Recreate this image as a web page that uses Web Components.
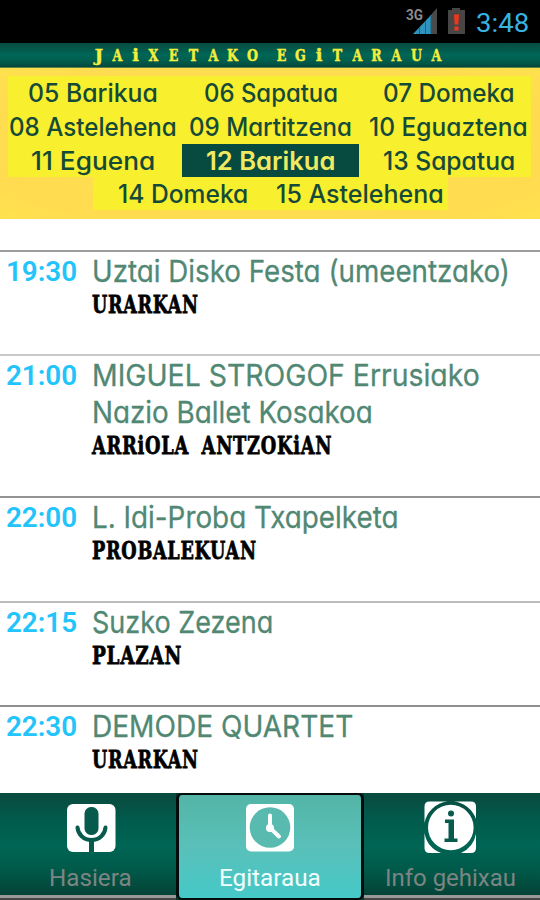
<!DOCTYPE html>
<html lang="eu">
<head>
<meta charset="utf-8">
<title>Jaixetako egitaraua</title>
<style>
body {
    margin: 0;
    width: 540px;
    height: 900px;
    overflow: hidden;
    background: #fff;
    font-family: Inter, "Liberation Sans", sans-serif;
}
</style>
</head>
<body>
<festa-app></festa-app>

<script>
// One line of text squeezed or stretched to the width in its attribute
class FitText extends HTMLElement {

    constructor() {
        super();
        this.shadowDOM = this.attachShadow({mode: "open"});
    }

    connectedCallback() {
        this.shadowDOM.innerHTML = `
        <style>
        :host {
            display: block;
            white-space: nowrap;
        }

        span {
            display: inline-block;
            transform-origin: 0 50%;
        }
        </style>
        <span>${this.getAttribute("text")}</span>`;

        const width = Number(this.getAttribute("width"));
        const span = this.shadowDOM.querySelector("span");
        this.style.width = `${width}px`;
        span.style.transform = `scaleX(${width / span.offsetWidth})`;
    }
}
customElements.define("fit-text", FitText);

class StatusBar extends HTMLElement {

    constructor() {
        super();
        this.attachShadow({mode: "open"}).innerHTML = `
        <style>
        :host {
            display: flex;
            justify-content: flex-end;
            box-sizing: border-box;
            height: 43px;
            padding-right: 11px;
            background: #000;
            font-family: Roboto, sans-serif;
        }

        svg {
            display: block;
            margin-right: 5px;
        }

        fit-text {
            margin-top: 7px;
            font-size: 26px;
            line-height: 32px;
            color: #38b2e2;
        }
        </style>
        <svg width="72" height="43" viewBox="0 0 72 43">
            <path d="M31 34V16L38 8V34Z" fill="#4a4a4a"/>
            <path d="M14 34L32 15V34Z" fill="#2f93bd"/>
            <path d="M20.500 27V34M26.500 21V34M32 15V34" stroke="#1d6584" stroke-width="1"/>
            <text x="7" y="20" font-family="Roboto" font-size="15" font-weight="700" fill="#8c8c8c" textLength="17" lengthAdjust="spacingAndGlyphs">3G</text>
            <path d="M49 10H53V8H61V10H66V34H49Z" fill="#484545"/>
            <path d="M55 14.500H60L59.300 24.500H55.700Z" fill="#f2361d"/>
            <rect x="55.500" y="26.500" width="4" height="4" fill="#f2361d"/>
        </svg>
        <fit-text text="3:48" width="53"></fit-text>`;
    }
}
customElements.define("status-bar", StatusBar);

class PageTitle extends HTMLElement {

    constructor() {
        super();
        this.attachShadow({mode: "open"}).innerHTML = `
        <style>
        :host {
            display: flex;
            box-sizing: border-box;
            height: 25px;
            padding-left: 95px;
            border-bottom: 1px solid #5d7f43;
            background: linear-gradient(#064c42, #006655 50%, #00604f 70%, #04483c);
            font: bold 17.5px/25px "DejaVu Serif", serif;
            color: #f6ee3c;
        }

        span {
            display: flex;
            justify-content: space-between;
            width: 347px;
        }

        i {
            display: flex;
            justify-content: center;
            width: 11px;
            font-style: normal;
            transform: scaleX(.72);
            -webkit-text-stroke: .5px #f6ee3c;
        }

        i.narrow {
            width: 8px;
            transform: none;
        }

        .gap {
            width: 0;
        }
        </style>
        <span>${[..."JAiXETAKO EGiTARAUA"].map(c => `<i class="${c === " " ? "gap" : c === "i" || c === "J" ? "narrow" : ""}">${c}</i>`).join("")}</span>`;
    }
}
customElements.define("page-title", PageTitle);

class DayItem extends HTMLElement {

    constructor() {
        super();
        this.shadowDOM = this.attachShadow({mode: "open"});
    }

    connectedCallback() {
        this.shadowDOM.innerHTML = `
        <style>
        :host {
            display: flex;
            justify-content: center;
            font-size: 25px;
            font-weight: 500;
            line-height: 35px;
            color: #164a38;
            font-feature-settings: "cv11";
        }

        :host([selected]) {
            background: #064a40;
            color: #f0ea60;
            font-weight: 600;
        }
        </style>
        <fit-text text="${this.getAttribute("label")}" width="${this.getAttribute("width")}"></fit-text>`;
    }
}
customElements.define("day-item", DayItem);

class DayPicker extends HTMLElement {

    constructor() {
        super();
        this.attachShadow({mode: "open"}).innerHTML = `
        <style>
        :host {
            display: block;
            box-sizing: border-box;
            height: 151px;
            padding: 8px 9px 0 8px;
            background: radial-gradient(ellipse at 50% 50%, #ffe650, #ffdb50 75%, #ffe14e);
        }

        .days {
            display: grid;
            grid-template-columns: 174px 177px 172px;
            grid-template-rows: 34px 34px 33px;
            background: #f8ef2e;
        }

        .days > :nth-child(3n + 1) {
            padding-right: 4px;
        }

        .days > :nth-child(3n) {
            padding-left: 7px;
        }

        .last {
            display: grid;
            grid-template-columns: 180px 174px;
            grid-template-rows: 33px;
            width: 355px;
            margin-left: 85px;
            background: #f8ef2e;
        }
        </style>
        <div class="days">
            <day-item label="05 Barikua" width="130"></day-item>
            <day-item label="06 Sapatua" width="134"></day-item>
            <day-item label="07 Domeka" width="132"></day-item>
            <day-item label="08 Astelehena" width="168"></day-item>
            <day-item label="09 Martitzena" width="163"></day-item>
            <day-item label="10 Eguaztena" width="159"></day-item>
            <day-item label="11 Eguena" width="124"></day-item>
            <day-item label="12 Barikua" width="129" selected></day-item>
            <day-item label="13 Sapatua" width="132"></day-item>
        </div>
        <div class="last">
            <day-item label="14 Domeka" width="130"></day-item>
            <day-item label="15 Astelehena" width="168"></day-item>
        </div>`;
    }
}
customElements.define("day-picker", DayPicker);

class EventItem extends HTMLElement {

    constructor() {
        super();
        this.shadowDOM = this.attachShadow({mode: "open"});
    }

    set event(event) {
        this._event = event;
    }

    // text widths can only be measured once the item is in the page
    connectedCallback() {
        this.render();
    }

    render() {
        this.shadowDOM.innerHTML = `
        <style>
        :host {
            display: grid;
            grid-template-columns: 86px 1fr;
            box-sizing: border-box;
            padding: 1px 0 0 6px;
            border-top: 2px solid ${this._event.line};
            height: ${this._event.height}px;
        }

        .time {
            padding-top: 1px;
            font: 600 27px/37px Roboto, sans-serif;
            color: #22c4fb;
        }

        .title {
            font-size: 30px;
            line-height: 37px;
            color: #518874;
            font-feature-settings: "cv11";
            -webkit-text-stroke: .3px #518874;
        }

        .venue {
            padding-top: 1px;
            font: bold 25px/28px "DejaVu Serif", serif;
            letter-spacing: 1px;
            word-spacing: 8px;
            color: #000;
            -webkit-text-stroke: .8px #000;
        }
        </style>
        <fit-text class="time" text="${this._event.time}" width="71"></fit-text>
        <div>
            ${this._event.title.map(([text, width]) => `<fit-text class="title" text="${text}" width="${width}"></fit-text>`).join("")}
            <fit-text class="venue" text="${this._event.venue[0]}" width="${this._event.venue[1]}"></fit-text>
        </div>`;
    }
}
customElements.define("event-item", EventItem);

class EventList extends HTMLElement {

    constructor() {
        super();
        this.shadowDOM = this.attachShadow({mode: "open"});
    }

    set events(events) {
        this._events = events;
        this.render();
    }

    render() {
        this.shadowDOM.innerHTML = `
        <style>
        :host {
            display: block;
            box-sizing: border-box;
            height: 574px;
            padding-top: 31px;
            overflow: hidden;
            background: #fff;
        }
        </style>`;
        this._events.forEach(event => {
            const item = document.createElement("event-item");
            item.event = event;
            this.shadowDOM.appendChild(item);
        });
    }
}
customElements.define("event-list", EventList);

class TabItem extends HTMLElement {

    constructor() {
        super();
        this.shadowDOM = this.attachShadow({mode: "open"});
    }

    connectedCallback() {
        this.shadowDOM.innerHTML = `
        <style>
        :host {
            display: flex;
            flex-direction: column;
            align-items: center;
            box-sizing: border-box;
            padding-top: 7px;
            border-bottom: 3px solid #999;
            box-shadow: 0 3px #454545;
            height: 105px;
            background: linear-gradient(#0b4a3f, #005c4d 28%, #006554 52%, #005a4a 75%, #044337);
            font: 24.5px/28px Roboto, sans-serif;
            color: #7c8583;
        }

        :host([selected]) {
            position: relative;
            height: 107px;
            padding-top: 5px;
            border: 3px solid #030c0b;
            border-top-width: 2px;
            border-bottom-width: 2px;
            border-radius: 6px;
            box-shadow: none;
            background: linear-gradient(#52b5a6, #5ac0b9 50%, #45c9c8);
            color: #f4ffff;
        }

        fit-text {
            margin-top: 8px;
        }
        </style>
        <slot></slot>
        <fit-text text="${this.getAttribute("label")}" width="${this.getAttribute("width")}"></fit-text>`;
    }
}
customElements.define("tab-item", TabItem);

class TabBar extends HTMLElement {

    constructor() {
        super();
        this.attachShadow({mode: "open"}).innerHTML = `
        <style>
        :host {
            display: grid;
            grid-template-columns: 176px 188px 176px;
            align-items: start;
            height: 107px;
            background: #03362e;
            overflow: hidden;
        }

        svg {
            display: block;
        }

        .first {
            padding-left: 5px;
        }

        .last {
            padding-right: 4px;
        }
        </style>
        <tab-item class="first" label="Hasiera" width="83">
            <svg width="54" height="56" viewBox="0 0 54 56">
                <rect x="3" y="4" width="48.500" height="48" rx="6" fill="#fff"/>
                <rect x="20.500" y="7" width="14" height="28" rx="6.500" fill="#075b4c"/>
                <path d="M13.500 27.500C14 34 19.500 40 27.500 40S41 34 41.500 27.500" fill="none" stroke="#075b4c" stroke-width="4" stroke-linecap="round"/>
                <path d="M27.500 40V52" stroke="#075b4c" stroke-width="5"/>
            </svg>
        </tab-item>
        <tab-item selected label="Egitaraua" width="102">
            <svg width="54" height="56" viewBox="0 0 54 56">
                <rect x="3" y="4" width="48" height="47.500" rx="5" fill="#fff"/>
                <circle cx="27" cy="27.500" r="20.300" fill="#59bbb0"/>
                <path d="M27 15.500V28L36 36.500" fill="none" stroke="#fff" stroke-width="4" stroke-linecap="round"/>
                <circle cx="27" cy="28" r="4" fill="#fff"/>
            </svg>
        </tab-item>
        <tab-item class="last" label="Info gehixau" width="131">
            <svg width="54" height="56" viewBox="0 0 54 56">
                <path d="M24.500 1.500H6.500Q1.500 1.500 1.500 6.500V23A26.500 26.500 0 0 1 24.500 1.500Z" fill="#fff"/>
                <path d="M30.500 1.500H48Q53 1.500 53 6.500V19A26.500 26.500 0 0 0 30.500 1.500Z" fill="#fff"/>
                <path d="M1.500 33V48Q1.500 53 6.500 53H18A26.500 26.500 0 0 1 1.500 33Z" fill="#fff"/>
                <path d="M53 34V48Q53 53 48 53H38A26.500 26.500 0 0 0 53 34Z" fill="#fff"/>
                <circle cx="27.800" cy="27.500" r="22.800" fill="#fff"/>
                <circle cx="28" cy="13.500" r="3" fill="#075b4c"/>
                <path d="M22 19.500H31V38.500H34.500V42H21.500V38.500H25.500V23H22Z" fill="#075b4c"/>
            </svg>
        </tab-item>`;
    }
}
customElements.define("tab-bar", TabBar);

class FestaApp extends HTMLElement {

    connectedCallback() {
        this.attachShadow({mode: "open"}).innerHTML = `
        <style>
        :host {
            display: flex;
            flex-direction: column;
            height: 900px;
        }
        </style>
        <status-bar></status-bar>
        <page-title></page-title>
        <day-picker></day-picker>
        <event-list></event-list>
        <tab-bar></tab-bar>`;

        this.shadowRoot.querySelector("event-list").events = [
            {time: "19:30", title: [["Uztai Disko Festa (umeentzako)", 418]], venue: ["URARKAN", 107], line: "#9c9c9c", height: 104},
            {time: "21:00", title: [["MIGUEL STROGOF Errusiako", 388], ["Nazio Ballet Kosakoa", 281]], venue: ["ARRiOLA ANTZOKiAN", 240], line: "#c9c9c9", height: 142},
            {time: "22:00", title: [["L. Idi-Proba Txapelketa", 307]], venue: ["PROBALEKUAN", 165], line: "#939393", height: 105},
            {time: "22:15", title: [["Suzko Zezena", 181]], venue: ["PLAZAN", 90], line: "#bcbcbc", height: 104},
            {time: "22:30", title: [["DEMODE QUARTET", 261]], venue: ["URARKAN", 107], line: "#8e8e8e", height: 104}
        ];
    }
}
customElements.define("festa-app", FestaApp);
</script>
</body>
</html>
